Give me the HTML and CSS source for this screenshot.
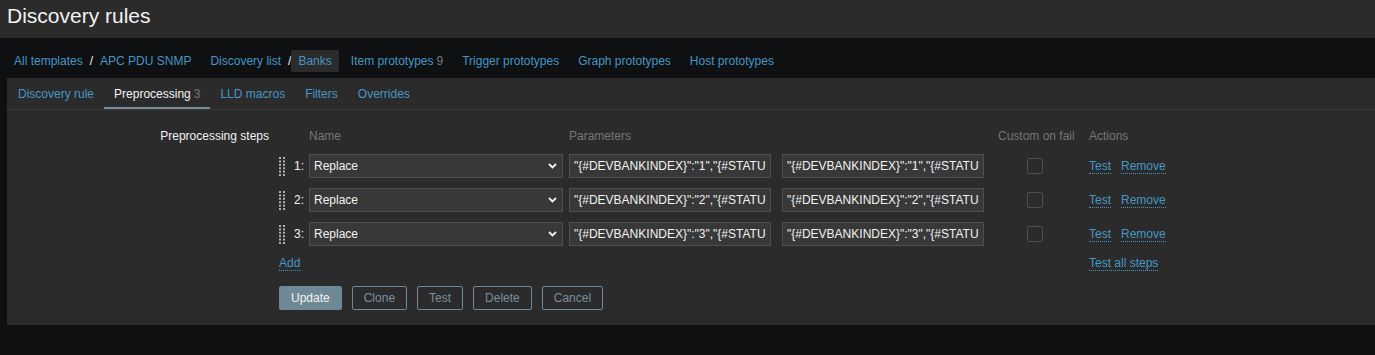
FILE: index.html
```html
<!DOCTYPE html>
<html lang="en">
  <head>
    <meta charset="UTF-8" />
    <meta name="viewport" content="width=device-width, initial-scale=1.0" />
    <title>Discovery rules</title>
    <link rel="stylesheet" href="styles.css">
  </head>
  <body>
    <header class="page-header">
      <h1>Discovery rules</h1>
    </header>

    <nav class="breadcrumbs">
      <ul>
        <li><a href="#">All templates</a><span class="sep">/</span><a href="#">APC PDU SNMP</a></li>
        <li><a href="#">Discovery list</a><span class="sep">/</span><a href="#" class="selected">Banks</a></li>
        <li><a href="#">Item prototypes<span class="count">9</span></a></li>
        <li><a href="#">Trigger prototypes</a></li>
        <li><a href="#">Graph prototypes</a></li>
        <li><a href="#">Host prototypes</a></li>
      </ul>
    </nav>

    <div class="panel">
      <ul class="tabs">
        <li><a href="#">Discovery rule</a></li>
        <li class="active"><a href="#">Preprocessing<span class="count">3</span></a></li>
        <li><a href="#">LLD macros</a></li>
        <li><a href="#">Filters</a></li>
        <li><a href="#">Overrides</a></li>
      </ul>

      <form class="form">
        <div class="form-row">
          <label class="form-label">Preprocessing steps</label>
          <div class="steps">
            <div></div>
            <div class="col-head">Name</div>
            <div class="col-head">Parameters</div>
            <div></div>
            <div class="col-head">Custom on fail</div>
            <div class="col-head">Actions</div>

            <div class="step-num">
              <svg class="drag" width="6" height="19" viewBox="0 0 6 19"><g fill="#a9b3b8"><rect x="0" y="0" width="2" height="2"/><rect x="4" y="0" width="2" height="2"/><rect x="0" y="3.4" width="2" height="2"/><rect x="4" y="3.4" width="2" height="2"/><rect x="0" y="6.8" width="2" height="2"/><rect x="4" y="6.8" width="2" height="2"/><rect x="0" y="10.2" width="2" height="2"/><rect x="4" y="10.2" width="2" height="2"/><rect x="0" y="13.6" width="2" height="2"/><rect x="4" y="13.6" width="2" height="2"/><rect x="0" y="17" width="2" height="2"/><rect x="4" y="17" width="2" height="2"/></g></svg>
              <span>1:</span>
            </div>
            <div class="select"><span>Replace</span><svg width="9" height="6" viewBox="0 0 9 6"><path d="M1 1l3.5 3.5L8 1" fill="none" stroke="#f2f2f2" stroke-width="1.8"/></svg></div>
            <div><input class="text" type="text" value='"{#DEVBANKINDEX}":"1","{#STATUS}":"' /></div>
            <div><input class="text" type="text" value='"{#DEVBANKINDEX}":"1","{#STATUS}":"' /></div>
            <div><span class="checkbox"></span></div>
            <div class="actions"><a href="#" class="link-action">Test</a><a href="#" class="link-action">Remove</a></div>

            <div class="step-num">
              <svg class="drag" width="6" height="19" viewBox="0 0 6 19"><g fill="#a9b3b8"><rect x="0" y="0" width="2" height="2"/><rect x="4" y="0" width="2" height="2"/><rect x="0" y="3.4" width="2" height="2"/><rect x="4" y="3.4" width="2" height="2"/><rect x="0" y="6.8" width="2" height="2"/><rect x="4" y="6.8" width="2" height="2"/><rect x="0" y="10.2" width="2" height="2"/><rect x="4" y="10.2" width="2" height="2"/><rect x="0" y="13.6" width="2" height="2"/><rect x="4" y="13.6" width="2" height="2"/><rect x="0" y="17" width="2" height="2"/><rect x="4" y="17" width="2" height="2"/></g></svg>
              <span>2:</span>
            </div>
            <div class="select"><span>Replace</span><svg width="9" height="6" viewBox="0 0 9 6"><path d="M1 1l3.5 3.5L8 1" fill="none" stroke="#f2f2f2" stroke-width="1.8"/></svg></div>
            <div><input class="text" type="text" value='"{#DEVBANKINDEX}":"2","{#STATUS}":"' /></div>
            <div><input class="text" type="text" value='"{#DEVBANKINDEX}":"2","{#STATUS}":"' /></div>
            <div><span class="checkbox"></span></div>
            <div class="actions"><a href="#" class="link-action">Test</a><a href="#" class="link-action">Remove</a></div>

            <div class="step-num">
              <svg class="drag" width="6" height="19" viewBox="0 0 6 19"><g fill="#a9b3b8"><rect x="0" y="0" width="2" height="2"/><rect x="4" y="0" width="2" height="2"/><rect x="0" y="3.4" width="2" height="2"/><rect x="4" y="3.4" width="2" height="2"/><rect x="0" y="6.8" width="2" height="2"/><rect x="4" y="6.8" width="2" height="2"/><rect x="0" y="10.2" width="2" height="2"/><rect x="4" y="10.2" width="2" height="2"/><rect x="0" y="13.6" width="2" height="2"/><rect x="4" y="13.6" width="2" height="2"/><rect x="0" y="17" width="2" height="2"/><rect x="4" y="17" width="2" height="2"/></g></svg>
              <span>3:</span>
            </div>
            <div class="select"><span>Replace</span><svg width="9" height="6" viewBox="0 0 9 6"><path d="M1 1l3.5 3.5L8 1" fill="none" stroke="#f2f2f2" stroke-width="1.8"/></svg></div>
            <div><input class="text" type="text" value='"{#DEVBANKINDEX}":"3","{#STATUS}":"' /></div>
            <div><input class="text" type="text" value='"{#DEVBANKINDEX}":"3","{#STATUS}":"' /></div>
            <div><span class="checkbox"></span></div>
            <div class="actions"><a href="#" class="link-action">Test</a><a href="#" class="link-action">Remove</a></div>

            <div class="footer-add"><a href="#" class="link-action">Add</a></div>
            <div><a href="#" class="link-action">Test all steps</a></div>
          </div>
        </div>

        <div class="form-row">
          <div></div>
          <div class="form-buttons">
            <button type="button" class="btn primary">Update</button>
            <button type="button" class="btn">Clone</button>
            <button type="button" class="btn">Test</button>
            <button type="button" class="btn">Delete</button>
            <button type="button" class="btn">Cancel</button>
          </div>
        </div>
      </form>
    </div>
  </body>
</html>
```

FILE: styles.css
```css
body {
  margin: 0;
  background-color: #0e1012;
  font-family: "Liberation Sans", Arial, sans-serif;
  font-size: 12px;
  color: #f2f2f2;
}
a {
  color: #4796c4;
  text-decoration: none;
}
.page-header {
  height: 38px;
  box-sizing: border-box;
  padding: 4px 7px 0;
  background-color: #2b2b2b;
}
.page-header h1 {
  margin: 0;
  font-size: 21px;
  line-height: 24px;
  font-weight: normal;
}
.breadcrumbs {
  padding: 12px 0 6px 7px;
}
.breadcrumbs ul {
  display: flex;
  gap: 5px;
  margin: 0;
  padding: 0;
  list-style: none;
}
.breadcrumbs li {
  display: flex;
  align-items: center;
  line-height: 22px;
}
.breadcrumbs a {
  padding: 0 7px;
  border-radius: 2px;
}
.breadcrumbs a.selected {
  background-color: #2b2b2b;
}
.count {
  margin-left: 3px;
  color: #787878;
}
.panel {
  margin-left: 7px;
  padding-bottom: 15px;
  background-color: #2b2b2b;
}
.tabs {
  display: flex;
  margin: 0;
  padding: 0 0 0 1px;
  list-style: none;
  border-bottom: 1px solid #383838;
}
.tabs a {
  display: block;
  padding: 1px 10px 0;
  line-height: 30px;
}
.tabs .active a {
  color: #f2f2f2;
  box-shadow: inset 0 -2px 0 #768d99;
}
.form {
  padding-top: 18px;
}
.form-row {
  display: grid;
  grid-template-columns: 262px 1fr;
  column-gap: 10px;
}
.form-label {
  text-align: right;
  line-height: 16px;
}
.steps {
  display: grid;
  grid-template-columns: 30px 260px 213px 216px 91px auto;
  row-gap: 10px;
  align-items: center;
}
.col-head {
  line-height: 16px;
  color: #767676;
}
.step-num {
  display: flex;
  align-items: center;
  gap: 9px;
}
.drag {
  display: block;
}
.select {
  display: flex;
  align-items: center;
  justify-content: space-between;
  width: 254px;
  height: 24px;
  box-sizing: border-box;
  padding: 0 5px 0 4px;
  border: 1px solid #4f4f4f;
  background-color: #383838;
}
.select svg {
  display: block;
}
.text {
  display: block;
  width: 202px;
  height: 24px;
  box-sizing: border-box;
  margin: 0;
  padding: 0 4px;
  border: 1px solid #4f4f4f;
  background-color: #383838;
  color: #f2f2f2;
  font-family: "Liberation Sans", Arial, sans-serif;
  font-size: 12px;
  outline: none;
}
.checkbox {
  display: block;
  width: 16px;
  height: 16px;
  box-sizing: border-box;
  margin-left: 29px;
  border: 1px solid #4f4f4f;
  border-radius: 2px;
}
.actions {
  display: flex;
  gap: 10px;
}
.link-action {
  display: inline-block;
  line-height: 14px;
  border-bottom: 1px dotted #4796c4;
}
.footer-add {
  grid-column: 1 / 6;
}
.form-buttons {
  display: flex;
  gap: 10px;
  margin-top: 15px;
}
.btn {
  height: 24px;
  padding: 0 11px;
  border: 1px solid #6f8896;
  border-radius: 2px;
  background: transparent;
  color: #7990a0;
  font-family: "Liberation Sans", Arial, sans-serif;
  font-size: 12px;
}
.btn.primary {
  background-color: #6f8896;
  color: #f2f2f2;
}
```
